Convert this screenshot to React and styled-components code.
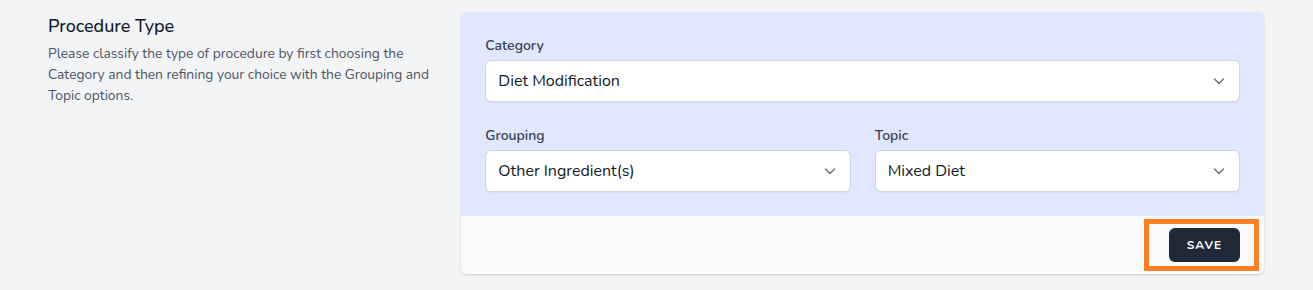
import React from "react"
import styled, { createGlobalStyle } from "styled-components"

const GlobalStyle = createGlobalStyle`
	* { box-sizing: border-box; }
	body {
		margin: 0;
		background: #f3f4f6;
		font-family: "Nunito", "Lato", "Open Sans", sans-serif;
		color: #111827;
	}
`

const Chevron = () => (
	<svg width="20" height="20" viewBox="0 0 20 20" fill="none">
		<path d="M5.5 8l4.5 4.5L14.5 8" stroke="#6b7280" strokeWidth="1.5" strokeLinecap="round" strokeLinejoin="round" />
	</svg>
)

const Select = ({ value }) => (
	<SelectBox>
		<span>{value}</span>
		<Chevron />
	</SelectBox>
)

const App = () => {
	return (
		<>
			<GlobalStyle />
			<Page>
				<Intro>
					<Title>Procedure Type</Title>
					<Description>
						Please classify the type of procedure by first choosing the Category and then refining your choice with the Grouping and Topic options.
					</Description>
				</Intro>
				<Card>
					<CardBody>
						<Field $wide>
							<Label>Category</Label>
							<Select value="Diet Modification" />
						</Field>
						<Field>
							<Label>Grouping</Label>
							<Select value="Other Ingredient(s)" />
						</Field>
						<Field>
							<Label>Topic</Label>
							<Select value="Mixed Diet" />
						</Field>
					</CardBody>
					<CardFooter>
						<Highlight>
							<SaveButton>Save</SaveButton>
						</Highlight>
					</CardFooter>
				</Card>
			</Page>
		</>
	)
}

const Page = styled.div`
	display: grid;
	grid-template-columns: repeat(3, 1fr);
	gap: 24px;
	padding: 12px 49px 16px 48px;
	align-items: start;
`

const Intro = styled.div``

const Title = styled.h3`
	margin: 0;
	font-size: 18px;
	line-height: 28px;
	font-weight: 500;
	color: #111827;
`

const Description = styled.p`
	margin: 3px 0 0;
	font-size: 13.8px;
	line-height: 21px;
	color: #4b5563;
`

const Card = styled.div`
	grid-column: span 2;
	border-radius: 6px;
	overflow: hidden;
	box-shadow: 0 1px 3px rgba(0, 0, 0, 0.1), 0 1px 2px rgba(0, 0, 0, 0.06);
`

const CardBody = styled.div`
	background: #e0e7ff;
	padding: 24px;
	display: grid;
	grid-template-columns: repeat(2, 1fr);
	gap: 24px;
`

const Field = styled.div`
	grid-column: ${(p) => (p.$wide ? "span 2" : "auto")};
`

const Label = styled.label`
	display: block;
	font-size: 14px;
	line-height: 20px;
	font-weight: 600;
	color: #374151;
	margin-bottom: 4px;
`

const SelectBox = styled.div`
	display: flex;
	align-items: center;
	justify-content: space-between;
	height: 42px;
	padding: 0 10px 0 12px;
	background: #fff;
	border: 1px solid #d1d5db;
	border-radius: 6px;
	box-shadow: 0 1px 2px rgba(0, 0, 0, 0.05);
	font-size: 16px;
	color: #111827;
`

const CardFooter = styled.div`
	background: #f9fafb;
	height: 58px;
	padding: 0 5px 0 24px;
	display: flex;
	align-items: center;
	justify-content: flex-end;
`

const Highlight = styled.div`
	border: 5px solid #ff8125;
	padding: 4px 14px 4px 20px;
`

const SaveButton = styled.button`
	display: block;
	height: 34px;
	width: 71px;
	border: none;
	border-radius: 6px;
	background: #1f2937;
	color: #fff;
	font-family: inherit;
	font-size: 12px;
	font-weight: 700;
	letter-spacing: 0.08em;
	text-transform: uppercase;
`

export default App
